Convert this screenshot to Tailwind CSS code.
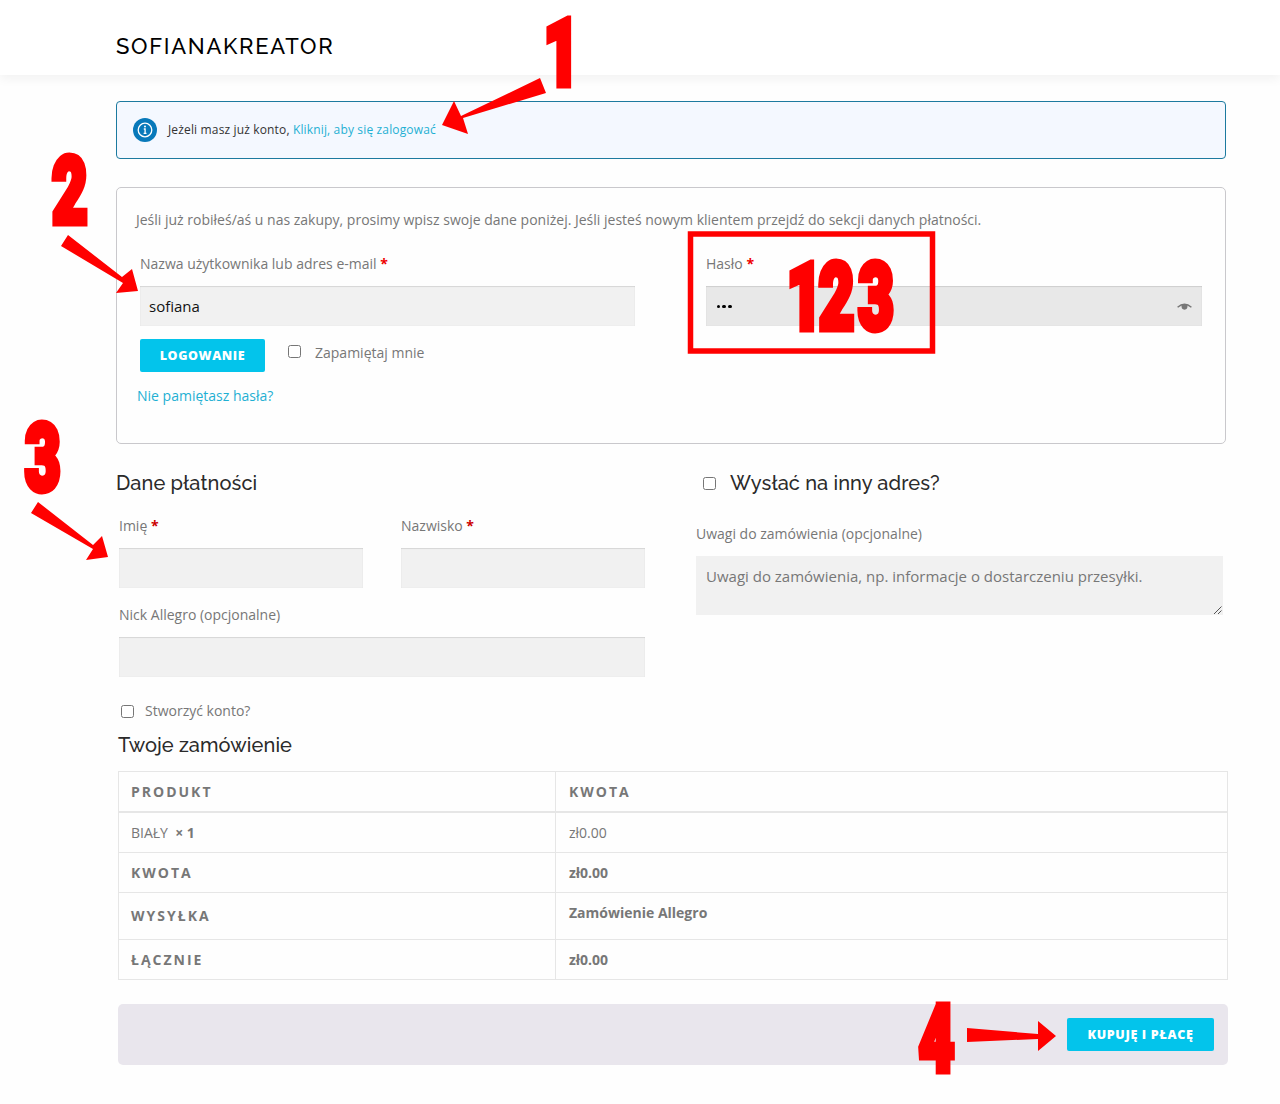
<!DOCTYPE html>
<html lang="pl">
<head>
<meta charset="utf-8">
<title>Sofianakreator</title>
<script src="https://cdn.jsdelivr.net/npm/@tailwindcss/browser@4"></script>
</head>
<body class="relative h-[1104px] w-[1280px] overflow-hidden bg-[#fefefe] font-['Open_Sans',sans-serif] text-[14px] leading-5 text-[#777]">
<header class="flex h-[75px] items-center bg-white pt-[17px] pl-[116px] shadow-[0_4px_10px_rgba(0,0,0,0.05)]">
  <h1 class="font-[Raleway,Lato,sans-serif] text-[22px] leading-[58px] font-medium tracking-[1.7px] whitespace-nowrap text-black">SOFIANAKREATOR</h1>
</header>
<main>
  <section class="mt-[26px] ml-[116px] flex h-[58px] w-[1110px] items-center rounded-[4px] border border-[#1c7a9f] bg-[#f4f8ff] pl-4">
    <svg class="size-6" viewBox="0 0 24 24"><circle cx="12" cy="12" r="12" fill="#0879ba"/><circle cx="12" cy="12" r="6.8" fill="none" stroke="#fff" stroke-width="1.3"/><circle cx="12" cy="8.600" r="1" fill="#fff"/><path d="M10.800 11h1.300v4.200M10.600 15.400h2.900" fill="none" stroke="#fff" stroke-width="1.300"/></svg>
    <p class="ml-[11px] text-[12px] tracking-[.15px] whitespace-nowrap text-[#333]">Jeżeli masz już konto, <a class="text-[#1fb0d3]">Kliknij, aby się zalogować</a></p>
  </section>

  <form class="mt-7 ml-[116px] flex h-[257px] w-[1110px] flex-col rounded-[5px] border border-[#c9c8cc] pt-[22px]">
    <p class="pl-[19px] whitespace-nowrap">Jeśli już robiłeś/aś u nas zakupy, prosimy wpisz swoje dane poniżej. Jeśli jesteś nowym klientem przejdź do sekcji danych płatności.</p>
    <div class="mt-6 flex gap-[71px] pl-[23px]">
      <div class="w-[495px]">
        <label class="block">Nazwa użytkownika lub adres e-mail <b class="text-[#e00]">*</b></label>
        <div class="mt-3 flex h-10 items-center bg-[#f1f1f1] pl-[9px] text-[15px] text-[#111] shadow-[inset_0_1px_1px_rgba(0,0,0,0.1),inset_0_0_1px_rgba(0,0,0,0.12)]">sofiana</div>
      </div>
      <div class="w-[496px]">
        <label class="block">Hasło <b class="text-[#e00]">*</b></label>
        <div class="mt-3 flex h-10 items-center justify-between bg-[#e8e8e8] pr-[10px] pl-[10px] shadow-[inset_0_1px_1px_rgba(0,0,0,0.1),inset_0_0_1px_rgba(0,0,0,0.12)]">
          <div class="mt-px flex gap-[2.200px] pl-[.5px]"><i class="size-[3.600px] rounded-full bg-black"></i><i class="size-[3.600px] rounded-full bg-black"></i><i class="size-[3.600px] rounded-full bg-black"></i></div>
          <svg class="mt-[2px] h-2 w-[15px]" viewBox="0 0 15 8"><path d="M.6 4.300Q7.500-2 14.400 4.300" fill="none" stroke="#777" stroke-width="1.400"/><path d="M4.600 1.500h5.800q.6 5.200-2.900 5.200T4.600 1.500z" fill="#777"/></svg>
        </div>
      </div>
    </div>
    <div class="mt-[13px] flex h-[33px] pl-[23px]">
      <div class="flex w-[125px] items-center justify-center rounded-[2px] bg-[#03c4eb] text-[12.500px] font-extrabold tracking-[.6px] text-white">LOGOWANIE</div>
      <i class="mt-[6px] ml-[23px] size-[13px] rounded-[2.500px] border border-[#767676] bg-white"></i>
      <span class="mt-1 ml-[14px]">Zapamiętaj mnie</span>
    </div>
    <a class="mt-[14px] pl-5 text-[#1fb0d3]">Nie pamiętasz hasła?</a>
  </form>

  <div class="ml-[116px] flex h-[281px] pt-[24px]">
    <section class="w-[580px]">
      <h2 class="font-[Raleway,Lato,sans-serif] text-[20px] leading-[30px] font-medium tracking-[.1px] text-[#2a2a2a]">Dane płatności</h2>
      <div class="mt-[18px] ml-[3px] grid w-[526px] grid-cols-2 gap-x-[38px]">
        <div><label class="block">Imię <b class="text-[#c00]">*</b></label><div class="mt-3 h-10 bg-[#f1f1f1] shadow-[inset_0_1px_1px_rgba(0,0,0,0.1),inset_0_0_1px_rgba(0,0,0,0.12)]"></div></div>
        <div><label class="block">Nazwisko <b class="text-[#c00]">*</b></label><div class="mt-3 h-10 bg-[#f1f1f1] shadow-[inset_0_1px_1px_rgba(0,0,0,0.1),inset_0_0_1px_rgba(0,0,0,0.12)]"></div></div>
        <div class="col-span-2 mt-[17px]"><label class="block">Nick Allegro (opcjonalne)</label><div class="mt-3 h-10 bg-[#f1f1f1] shadow-[inset_0_1px_1px_rgba(0,0,0,0.1),inset_0_0_1px_rgba(0,0,0,0.12)]"></div></div>
      </div>
      <div class="mt-6 ml-[5px] flex items-center"><i class="mt-px size-[13px] rounded-[2.500px] border border-[#767676] bg-white"></i><span class="ml-[11px]">Stworzyć konto?</span></div>
    </section>
    <section class="w-[527px]">
      <h2 class="flex items-center font-[Raleway,Lato,sans-serif] text-[20px] leading-[30px] font-medium tracking-[.1px] text-[#2a2a2a]"><i class="ml-[7px] size-[13px] rounded-[2.500px] border border-[#767676] bg-white"></i><span class="ml-[14px]">Wysłać na inny adres?</span></h2>
      <label class="mt-[26px] block">Uwagi do zamówienia (opcjonalne)</label>
      <div class="relative mt-3 h-[59px] bg-[#f1f1f1] px-[10px] pt-[10px] text-[15px] text-[#777]">Uwagi do zamówienia, np. informacje o dostarczeniu przesyłki.
        <svg class="absolute right-0 bottom-0 size-[10px]" viewBox="0 0 10 10"><path d="M1 9l7.500-7.500M5 9l3.500-3.500" stroke="#555" stroke-width="1" fill="none"/></svg>
      </div>
    </section>
  </div>

  <section class="ml-[118px] w-[1110px]">
    <h2 class="pt-[5px] font-[Raleway,Lato,sans-serif] text-[20px] leading-[30px] font-medium tracking-[.1px] text-[#2a2a2a]">Twoje zamówienie</h2>
    <div class="mt-[11px] grid grid-cols-[437px_1fr] grid-rows-[39px_42px_40px_47px_40px] border-x border-t border-[#e6e6e6]">
      <div class="flex items-center border-r border-[#e6e6e6] pt-px pl-3 font-bold tracking-[2px]">PRODUKT</div>
      <div class="flex items-center pt-px pl-[13px] font-bold tracking-[2px]">KWOTA</div>
      <div class="flex items-center border-t-2 border-r border-b border-[#e6e6e6] pt-px pl-3"><span>BIAŁY&nbsp; <b>× 1</b></span></div>
      <div class="flex items-center border-t-2 border-b border-[#e6e6e6] pt-px pl-[13px]">zł0.00</div>
      <div class="flex items-center border-r border-b border-[#e6e6e6] pl-3 font-bold tracking-[2px]">KWOTA</div>
      <div class="flex items-center border-b border-[#e6e6e6] pl-[13px] font-bold">zł0.00</div>
      <div class="flex items-center border-r border-b border-[#e6e6e6] pl-3 font-bold tracking-[2px]">WYSYŁKA</div>
      <div class="border-b border-[#e6e6e6] pt-[10px] pl-[13px] font-bold">Zamówienie Allegro</div>
      <div class="flex items-center border-r border-b border-[#e6e6e6] pl-3 font-bold tracking-[2px]">ŁĄCZNIE</div>
      <div class="flex items-center border-b border-[#e6e6e6] pl-[13px] font-bold">zł0.00</div>
    </div>
    <div class="mt-6 flex h-[61px] items-center justify-end rounded-[5px] bg-[#e9e6ed] pr-[14px]">
      <div class="flex h-[33px] w-[147px] items-center justify-center rounded-[2px] bg-[#03c4eb] text-[12.500px] font-extrabold tracking-[.65px] text-white">KUPUJĘ I PŁACĘ</div>
    </div>
  </section>
</main>

<!-- numbered instruction markers -->
<svg class="absolute inset-0 h-[1104px] w-[1280px]" viewBox="0 0 1280 1104" fill="#f00">
  <path d="M540 78l6 15-83 25 5 16-26-9 12-24 7 15z"/>
  <path d="M68 235l54 42 10-8 6 22-22 2 7-10-62-37z"/>
  <path d="M38 502l55 43 9-9 6 21-22 3 7-11-62-36z"/>
  <path d="M967 1028l71 6v-13l18 15-18 15v-12l-71 3z"/>
  <rect x="690.500" y="234" width="242" height="117" fill="none" stroke="#f00" stroke-width="5.500"/>
  <g font-family="Roboto, sans-serif" font-weight="900" font-size="93" stroke="#f00" stroke-width="7" text-anchor="middle">
    <text transform="translate(561.500 84.500) scale(.66 1)">1</text>
    <text transform="translate(69.700 222.500) scale(.66 1)">2</text>
    <text transform="translate(42.700 489.500) scale(.66 1)">3</text>
    <text transform="translate(936.500 1070.500) scale(.66 1)">4</text>
    <text transform="translate(804.500 328.500) scale(.66 1)">1</text>
    <text transform="translate(836.500 328.500) scale(.66 1)">2</text>
    <text transform="translate(876 328.500) scale(.66 1)">3</text>
  </g>
</svg>
</body>
</html>
